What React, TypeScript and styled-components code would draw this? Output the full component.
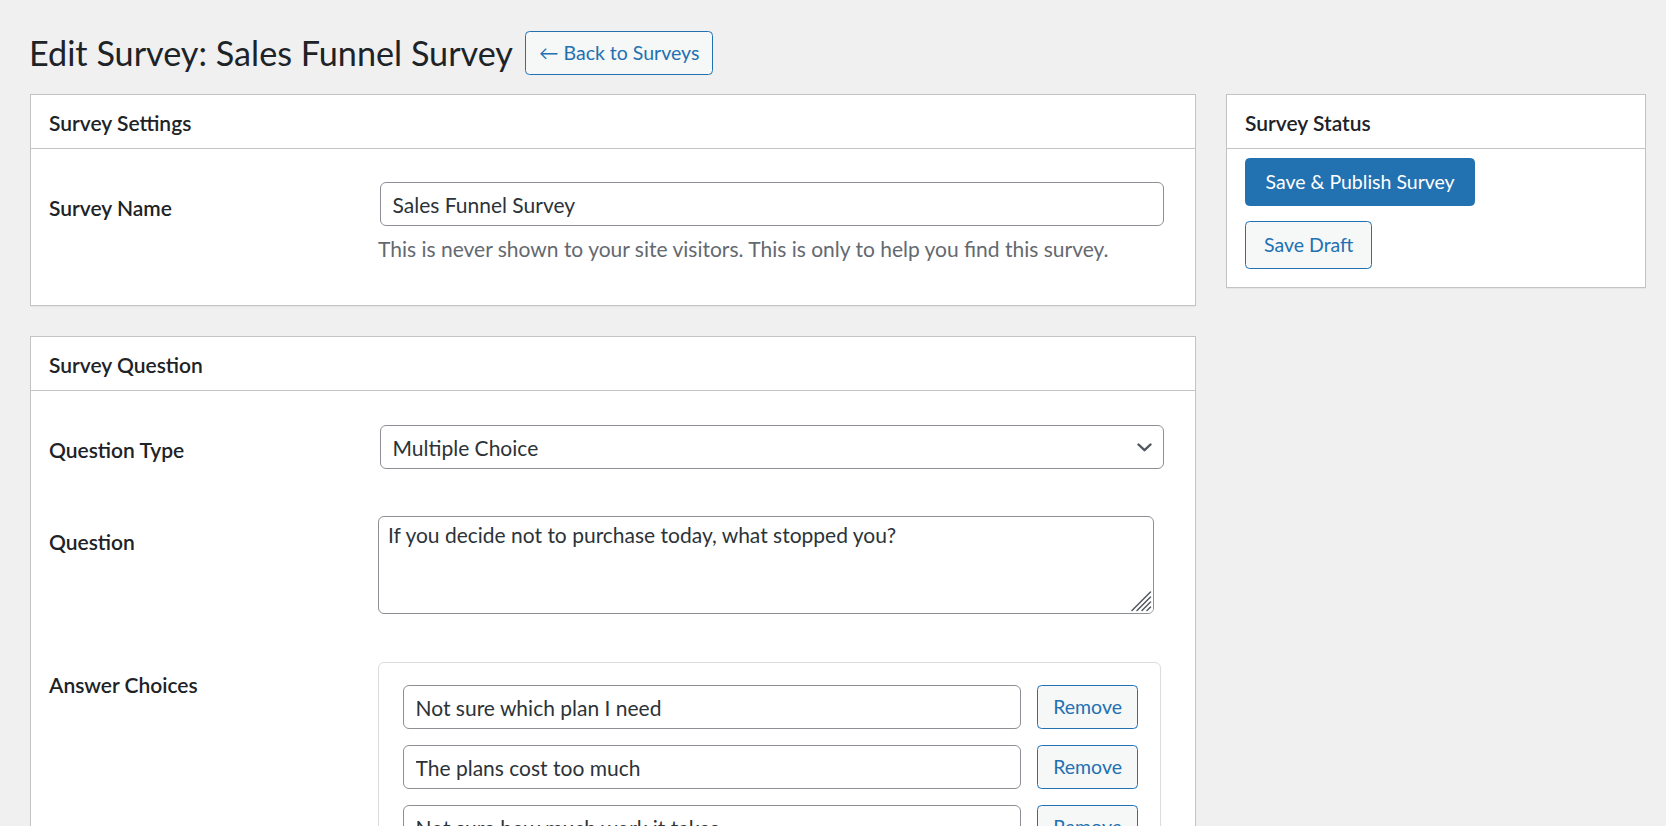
import React from "react";
import styled, { createGlobalStyle } from "styled-components";

const FONT = `Lato, "Noto Sans", "Liberation Sans", sans-serif`;

const Global = createGlobalStyle`
  html { scrollbar-width: none; }
  html::-webkit-scrollbar { display: none; }
  * { box-sizing: border-box; }
  body {
    margin: 0;
    background: #f0f0f1;
    color: #1d2327;
    font-family: ${FONT};
    font-size: 19.5px;
  }
`;

const Wrap = styled.div`
  padding: 30px 20px 60px 30px;
`;

const TitleBar = styled.div`
  display: flex;
  align-items: center;
  gap: 12px;
  height: 45px;
`;

const Title = styled.h1`
  margin: 0 0 0 -1px;
  font-family: ${FONT};
  font-size: 34.2px;
  font-weight: 400;
  line-height: 45px;
  color: #1d2327;
`;

const SecondaryButton = styled.button<{ $h?: number; $pad?: number }>`
  height: ${(p) => p.$h ?? 44}px;
  padding: 0 ${(p) => p.$pad ?? 16}px;
  border: 1px solid #2271b1;
  border-radius: 4.5px;
  background: #f6f7f7;
  color: #2271b1;
  font-family: ${FONT};
  font-size: 19.5px;
  font-weight: 400;
  line-height: 1;
  white-space: nowrap;
  cursor: pointer;
  flex: none;
`;

const PrimaryButton = styled.button`
  height: 48px;
  padding: 0 19.5px;
  border: 1px solid #2271b1;
  border-radius: 4.5px;
  background: #2271b1;
  color: #fff;
  font-family: ${FONT};
  font-size: 19.5px;
  font-weight: 400;
  line-height: 1;
  white-space: nowrap;
  cursor: pointer;
`;

const Columns = styled.div`
  display: grid;
  grid-template-columns: minmax(0, 1fr) 420px;
  gap: 30px;
  margin-top: 19px;
  align-items: start;
`;

const Stack = styled.div`
  display: flex;
  flex-direction: column;
  gap: 30px;
`;

const Panel = styled.section`
  background: #fff;
  border: 1px solid #c3c4c7;
  box-shadow: 0 1px 1px rgba(0, 0, 0, 0.04);
`;

const PanelHeader = styled.h2`
  margin: 0;
  height: 54px;
  padding: 2px 18px 0;
  display: flex;
  align-items: center;
  border-bottom: 1px solid #c3c4c7;
  font-family: ${FONT};
  font-size: 21px;
  font-weight: 600;
  color: #1d2327;
`;

const FormBody = styled.div<{ $bottom: number }>`
  padding: 0 30px ${(p) => p.$bottom}px 18px;
`;

const FormRow = styled.div<{ $top: number }>`
  display: grid;
  grid-template-columns: 329px minmax(0, 1fr);
  align-items: start;
  padding-top: ${(p) => p.$top}px;
`;

const Label = styled.label<{ $nudge: number }>`
  padding-top: ${(p) => p.$nudge}px;
  margin-bottom: -${(p) => p.$nudge}px;
  font-family: ${FONT};
  font-size: 21px;
  font-weight: 600;
  line-height: 44px;
  color: #1d2327;
`;

const Field = styled.div`
  min-width: 0;
`;

const TextInput = styled.input`
  display: block;
  width: calc(100% - 3px);
  height: 44px;
  margin: 0 1.5px;
  padding: 0 12px;
  border: 1px solid #8c8f94;
  border-radius: 6px;
  background: #fff;
  color: #2c3338;
  font-family: ${FONT};
  font-size: 21px;
  outline: none;
`;

const Description = styled.p`
  margin: 7px 0 0;
  font-family: ${FONT};
  font-size: 21px;
  line-height: 31px;
  color: #646970;
`;

const SelectWrap = styled.div`
  position: relative;
  margin: 0 1.5px;
`;

const Select = styled.select`
  display: block;
  width: 100%;
  height: 44px;
  padding: 0 40px 0 12px;
  border: 1px solid #8c8f94;
  border-radius: 6px;
  background: #fff;
  color: #2c3338;
  font-family: ${FONT};
  font-size: 21px;
  appearance: none;
  -webkit-appearance: none;
  outline: none;
`;

const Chevron = styled.svg`
  position: absolute;
  right: 12px;
  top: 18px;
  width: 15px;
  height: 9px;
  pointer-events: none;
`;

const TextAreaWrap = styled.div`
  position: relative;
  width: calc(100% - 11px);
`;

const TextArea = styled.textarea`
  display: block;
  width: 100%;
  height: 98px;
  padding: 3px 9px;
  border: 1px solid #8c8f94;
  border-radius: 6px;
  background: #fff;
  color: #2c3338;
  font-family: ${FONT};
  font-size: 21px;
  line-height: 30px;
  resize: vertical;
  outline: none;
`;

const Grip = styled.svg`
  position: absolute;
  right: 1px;
  bottom: 1px;
  width: 24px;
  height: 24px;
  background: #fff;
  border-bottom-right-radius: 5px;
  pointer-events: none;
`;

const ChoiceBox = styled.div`
  width: calc(100% - 4px);
  padding: 22px;
  border: 1px solid #dcdcde;
  border-radius: 6px;
  display: flex;
  flex-direction: column;
  gap: 16px;
`;

const ChoiceRow = styled.div`
  display: flex;
  align-items: center;
  gap: 15px;
`;

const ChoiceInput = styled(TextInput)`
  flex: 1;
  width: auto;
  min-width: 0;
`;

const StatusBody = styled.div`
  padding: 9px 18px 18px;
  display: flex;
  flex-direction: column;
  align-items: flex-start;
  gap: 15px;
`;

const choices = [
  "Not sure which plan I need",
  "The plans cost too much",
  "Not sure how much work it takes",
];

export default function App() {
  return (
    <>
      <Global />
      <Wrap>
        <TitleBar>
          <Title>Edit Survey: Sales Funnel Survey</Title>
          <SecondaryButton $h={44} $pad={13}>← Back to Surveys</SecondaryButton>
        </TitleBar>
        <Columns>
          <Stack>
            <Panel>
              <PanelHeader>Survey Settings</PanelHeader>
              <FormBody $bottom={41}>
                <FormRow $top={33}>
                  <Label $nudge={4}>Survey Name</Label>
                  <Field>
                    <TextInput defaultValue="Sales Funnel Survey" />
                    <Description>
                      This is never shown to your site visitors. This is only to help you find this survey.
                    </Description>
                  </Field>
                </FormRow>
              </FormBody>
            </Panel>
            <Panel>
              <PanelHeader>Survey Question</PanelHeader>
              <FormBody $bottom={40}>
                <FormRow $top={34}>
                  <Label $nudge={3}>Question Type</Label>
                  <Field>
                    <SelectWrap>
                      <Select defaultValue="multiple">
                        <option value="multiple">Multiple Choice</option>
                        <option value="text">Open Text</option>
                      </Select>
                      <Chevron viewBox="0 0 15 9">
                        <path d="M1.5 1.5 L7.5 7.2 L13.5 1.5" fill="none" stroke="#50575e" strokeWidth="2.4" strokeLinecap="round" strokeLinejoin="round" />
                      </Chevron>
                    </SelectWrap>
                  </Field>
                </FormRow>
                <FormRow $top={47}>
                  <Label $nudge={4}>Question</Label>
                  <Field>
                    <TextAreaWrap>
                      <TextArea defaultValue="If you decide not to purchase today, what stopped you?" />
                      <Grip viewBox="0 0 24 24">
                        <g stroke="#50575e" strokeWidth="1.5" strokeLinecap="round">
                          <line x1="3" y1="21.5" x2="21.5" y2="3" />
                          <line x1="8" y1="21.5" x2="21.5" y2="8" />
                          <line x1="13" y1="21.5" x2="21.5" y2="13" />
                          <line x1="18" y1="21.5" x2="21.5" y2="18" />
                        </g>
                      </Grip>
                    </TextAreaWrap>
                  </Field>
                </FormRow>
                <FormRow $top={48}>
                  <Label $nudge={1}>Answer Choices</Label>
                  <Field>
                    <ChoiceBox>
                      {choices.map((c) => (
                        <ChoiceRow key={c}>
                          <ChoiceInput defaultValue={c} />
                          <SecondaryButton $h={44} $pad={15}>Remove</SecondaryButton>
                        </ChoiceRow>
                      ))}
                    </ChoiceBox>
                  </Field>
                </FormRow>
              </FormBody>
            </Panel>
          </Stack>
          <Panel>
            <PanelHeader>Survey Status</PanelHeader>
            <StatusBody>
              <PrimaryButton>Save &amp; Publish Survey</PrimaryButton>
              <SecondaryButton $h={48} $pad={18}>Save Draft</SecondaryButton>
            </StatusBody>
          </Panel>
        </Columns>
      </Wrap>
    </>
  );
}
